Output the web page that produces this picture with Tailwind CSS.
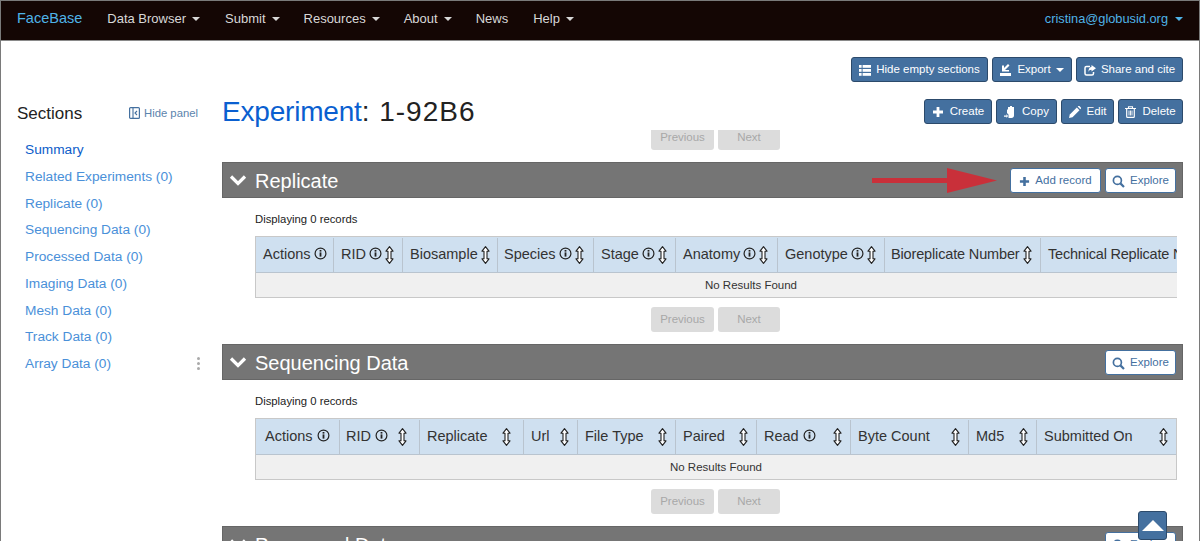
<!DOCTYPE html>
<html lang="en">
<head>
    <meta charset="UTF-8">
    <meta name="viewport" content="width=device-width, initial-scale=1.0">
    <title>Experiment: 1-92B6</title>
    <script src="https://cdn.jsdelivr.net/npm/@tailwindcss/browser@4"></script>
</head>
<body class="bg-white">
    <svg class="hidden">
        <symbol id="sort" viewBox="0 0 9 18"><path d="M4.5 .7L8 5.2H6V12.8H8L4.5 17.3L1 12.8H3V5.2H1Z" fill="#fff" stroke="#222" stroke-width="1.1" stroke-linejoin="round"/></symbol>
        <symbol id="info" viewBox="0 0 13 13"><circle cx="6.5" cy="6.5" r="5.4" fill="none" stroke="#222" stroke-width="1.2"/><rect x="5.6" y="5.4" width="1.8" height="4.2" fill="#222"/><rect x="5.6" y="3" width="1.8" height="1.6" fill="#222"/></symbol>
        <symbol id="chev" viewBox="0 0 18 12"><path d="M2 2.5L9 9.5L16 2.5" fill="none" stroke="#fff" stroke-width="3.2"/></symbol>
        <symbol id="plus" viewBox="0 0 12 12"><path d="M6 1V11M1 6H11" fill="none" stroke="currentColor" stroke-width="2.8"/></symbol>
        <symbol id="search" viewBox="0 0 13 13"><circle cx="5.4" cy="5.4" r="4" fill="none" stroke="currentColor" stroke-width="1.7"/><path d="M8.4 8.4L12 12" stroke="currentColor" stroke-width="2.2"/></symbol>
    </svg>

    <div class="relative w-[1200px] h-[541px] overflow-hidden border-t border-x border-[#7a7a7a] font-['Liberation_Sans',Arial,sans-serif] text-[#222]">
        <!-- top nav -->
        <nav class="flex items-center h-[36px] bg-[#140604] border-b border-[#8a8a8a] box-content pl-4 pr-[16px] pb-[3px] text-[13px] text-[#d8d8d8]">
            <a class="text-[14.5px] text-[#4fb3e8] mr-[25px]">FaceBase</a>
            <a class="flex items-center gap-[6px] mr-[25px]">Data Browser <span class="border-x-[4px] border-x-transparent border-t-[4px] border-t-[#d8d8d8]"></span></a>
            <a class="flex items-center gap-[6px] mr-[24px]">Submit <span class="border-x-[4px] border-x-transparent border-t-[4px] border-t-[#d8d8d8]"></span></a>
            <a class="flex items-center gap-[6px] mr-[24px]">Resources <span class="border-x-[4px] border-x-transparent border-t-[4px] border-t-[#d8d8d8]"></span></a>
            <a class="flex items-center gap-[6px] mr-[24px]">About <span class="border-x-[4px] border-x-transparent border-t-[4px] border-t-[#d8d8d8]"></span></a>
            <a class="mr-[25px]">News</a>
            <a class="flex items-center gap-[6px]">Help <span class="border-x-[4px] border-x-transparent border-t-[4px] border-t-[#d8d8d8]"></span></a>
            <a class="flex items-center gap-[6px] ml-auto text-[12.8px] text-[#4fb3e8]">cristina@globusid.org <span class="ml-[1px] border-x-[4px] border-x-transparent border-t-[4px] border-t-[#4fb3e8]"></span></a>
        </nav>

        <div class="flex">
            <!-- sidebar -->
            <aside class="relative w-[221px] shrink-0 pt-[62px]">
                <div class="flex items-center h-[20px] pl-4 pr-[24px]">
                    <span class="text-[17px] leading-none">Sections</span>
                    <span class="flex items-center gap-[4px] ml-auto text-[11.3px] text-[#5b84ad]">
                        <svg width="11" height="12" viewBox="0 0 11 12"><rect x=".6" y=".6" width="9.8" height="10.8" rx="1" fill="none" stroke="#44709f" stroke-width="1.2"/><path d="M4 1V11M8 4L6 6L8 8" fill="none" stroke="#44709f" stroke-width="1.1"/></svg>
                        Hide panel
                    </span>
                </div>
                <ul class="mt-[14px] pl-6 text-[13.7px] text-[#4a90d9] leading-[26.75px]">
                    <li class="text-[#0b5cc9]">Summary</li>
                    <li>Related Experiments (0)</li>
                    <li>Replicate (0)</li>
                    <li>Sequencing Data (0)</li>
                    <li>Processed Data (0)</li>
                    <li>Imaging Data (0)</li>
                    <li>Mesh Data (0)</li>
                    <li>Track Data (0)</li>
                    <li>Array Data (0)</li>
                </ul>
                <div class="absolute left-[196px] top-[316px] flex flex-col gap-[2px]">
                    <span class="w-[3px] h-[3px] rounded-full bg-[#aaa]"></span>
                    <span class="w-[3px] h-[3px] rounded-full bg-[#aaa]"></span>
                    <span class="w-[3px] h-[3px] rounded-full bg-[#aaa]"></span>
                </div>
            </aside>

            <main class="w-[961px] shrink-0">
                <!-- page toolbar -->
                <div class="flex justify-end gap-1 mt-4 text-[11.5px] text-white">
                    <button class="flex items-center justify-center gap-[5px] w-[137px] h-[25px] pt-[1px] rounded-[3px] bg-[#44709f] border border-[#2c4a6b] whitespace-nowrap">
                        <svg width="12" height="11" viewBox="0 0 12 11" fill="#fff"><rect y="0" width="2.6" height="2.8"/><rect x="3.6" y="0" width="8.4" height="2.8"/><rect y="4" width="2.6" height="2.8"/><rect x="3.6" y="4" width="8.4" height="2.8"/><rect y="8" width="2.6" height="2.8"/><rect x="3.6" y="8" width="8.4" height="2.8"/></svg>
                        Hide empty sections
                    </button>
                    <button class="flex items-center justify-center gap-[5px] w-[80px] h-[25px] pt-[1px] rounded-[3px] bg-[#44709f] border border-[#2c4a6b] whitespace-nowrap">
                        <svg width="12" height="12" viewBox="0 0 12 12" fill="#fff"><rect x="0" y="9" width="11" height="3"/><path d="M2 7.5H9V6H5L9.5 1.5L8 0L4 4V1.5H2Z"/></svg>
                        Export
                        <span class="border-x-[4px] border-x-transparent border-t-[4px] border-t-white"></span>
                    </button>
                    <button class="flex items-center justify-center gap-[5px] w-[107px] h-[25px] pt-[1px] rounded-[3px] bg-[#44709f] border border-[#2c4a6b] whitespace-nowrap">
                        <svg width="12" height="11" viewBox="0 0 12 11"><path d="M6 1.5H2.5A1.5 1.5 0 0 0 1 3V8.5A1.5 1.5 0 0 0 2.5 10H8A1.5 1.5 0 0 0 9.500 8.500V7" fill="none" stroke="#fff" stroke-width="1.500"/><path d="M7.500 0L12 3.200L7.500 6.500V4.700C5.800 4.700 5 5.500 4.500 7C4.300 4.500 5.300 2.200 7.500 1.800Z" fill="#fff"/></svg>
                        Share and cite
                    </button>
                </div>

                <!-- title row -->
                <div class="flex items-start justify-between mt-[17px] h-[31px]">
                    <h1 class="text-[28px] leading-[26px]"><span class="text-[#0a5fd0] tracking-[-0.2px]">Experiment</span><span class="tracking-[1px]">: 1-92B6</span></h1>
                    <div class="flex gap-1 text-[11.5px] text-white">
                        <button class="flex items-center justify-center gap-[6px] w-[68px] h-[25px] pt-[1px] rounded-[3px] bg-[#44709f] border border-[#2c4a6b]">
                            <svg class="w-[12px] h-[12px]"><use href="#plus"/></svg>
                            Create
                        </button>
                        <button class="flex items-center justify-center gap-[6px] w-[61px] h-[25px] pt-[1px] rounded-[3px] bg-[#44709f] border border-[#2c4a6b]">
                            <svg width="12" height="13" viewBox="0 0 12 13" fill="#fff"><path d="M4 1H6V0H8V1H10V2V9.500C10 11 9 12 7.500 12H4.500V8.500L3 7V3.500H4Z"/><path d="M0 9.500H2.500V8L4 10L2.500 12V10.800H0Z"/></svg>
                            Copy
                        </button>
                        <button class="flex items-center justify-center gap-[6px] w-[53px] h-[25px] pt-[1px] rounded-[3px] bg-[#44709f] border border-[#2c4a6b]">
                            <svg width="12" height="12" viewBox="0 0 12 12" fill="#fff"><path d="M0 12L.8 8.500L7.800 1.500L10.500 4.200L3.500 11.200Z"/><path d="M8.700 .6L9.300 0C9.700 -.2 10 -.2 10.400 .1L11.900 1.600C12.100 2 12.100 2.300 11.800 2.700L11.300 3.300Z"/></svg>
                            Edit
                        </button>
                        <button class="flex items-center justify-center gap-[6px] w-[65px] h-[25px] pt-[1px] rounded-[3px] bg-[#44709f] border border-[#2c4a6b]">
                            <svg width="11" height="12" viewBox="0 0 11 12"><path d="M0 2.500H11M3.500 2.500V.8H7.500V2.500" fill="none" stroke="#fff" stroke-width="1.100"/><path d="M1.700 2.500V10.500C1.700 11 2 11.400 2.500 11.400H8.500C9 11.400 9.300 11 9.300 10.500V2.500" fill="none" stroke="#fff" stroke-width="1.200"/><path d="M4 4.500V9.500M5.500 4.500V9.500M7 4.500V9.500" stroke="#fff" stroke-width=".9"/></svg>
                            Delete
                        </button>
                    </div>
                </div>

                <!-- pager of the section above, scrolled out of view -->
                <div class="flex items-end justify-center gap-1 h-[20px] pl-[26px] overflow-hidden text-[11.5px] text-[#a8a8a8]">
                    <span class="flex items-center justify-center shrink-0 w-[63px] h-[25px] pt-[1px] rounded-[3px] bg-[#dcdcdc]">Previous</span>
                    <span class="flex items-center justify-center shrink-0 w-[62px] h-[25px] pt-[1px] rounded-[3px] bg-[#dcdcdc]">Next</span>
                </div>

                <!-- Replicate -->
                <section class="mt-[12px]">
                    <div class="flex items-center h-[36px] bg-[#757575] border border-[#666] pl-[6px] pr-[6px] text-white">
                        <svg class="w-[18px] h-[12px]"><use href="#chev"/></svg>
                        <h2 class="ml-[8px] mt-[2px] text-[20px]">Replicate</h2>
                        <div class="flex gap-1 ml-auto mt-[1px] text-[11.5px] text-[#44709f]">
                            <button class="flex items-center justify-center gap-[5px] w-[91px] h-[25px] pt-[1px] rounded-[3px] bg-white border border-[#44709f]">
                                <svg class="w-[11px] h-[11px]"><use href="#plus"/></svg>
                                Add record
                            </button>
                            <button class="flex items-center justify-center gap-[5px] w-[71px] h-[25px] pt-[1px] rounded-[3px] bg-white border border-[#44709f]">
                                <svg class="w-[13px] h-[13px]"><use href="#search"/></svg>
                                Explore
                            </button>
                        </div>
                    </div>
                    <div class="pl-[33px] pr-[6px]">
                        <p class="h-[38px] pt-[14px] text-[11.3px] leading-[14px]">Displaying 0 records</p>
                        <div class="overflow-hidden border-l border-y border-[#c8c8c8] h-[62px]">
                            <div class="flex h-[36px] w-[1200px] pt-[1px] bg-[#cfe0f0] border-b border-[#b9c4cf] text-[14.5px] text-[#333] whitespace-nowrap">
                                <div class="flex items-center gap-[3px] w-[78px] px-[7px] border-r border-[#b9c4cf]">Actions <svg class="shrink-0 w-[13px] h-[13px] -mt-[3px]"><use href="#info"/></svg></div>
                                <div class="flex items-center gap-[3px] w-[69px] px-[7px] border-r border-[#b9c4cf]">RID <svg class="shrink-0 w-[13px] h-[13px] -mt-[3px]"><use href="#info"/></svg> <svg class="shrink-0 w-[9px] h-[18px]"><use href="#sort"/></svg></div>
                                <div class="flex items-center gap-[3px] w-[95px] px-[7px] border-r border-[#b9c4cf]">Biosample <svg class="shrink-0 w-[9px] h-[18px]"><use href="#sort"/></svg></div>
                                <div class="flex items-center gap-[3px] w-[96px] px-[6px] border-r border-[#b9c4cf]">Species <svg class="shrink-0 w-[13px] h-[13px] -mt-[3px]"><use href="#info"/></svg> <svg class="shrink-0 w-[9px] h-[18px]"><use href="#sort"/></svg></div>
                                <div class="flex items-center gap-[3px] w-[82px] px-[7px] border-r border-[#b9c4cf]">Stage <svg class="shrink-0 w-[13px] h-[13px] -mt-[3px]"><use href="#info"/></svg> <svg class="shrink-0 w-[9px] h-[18px]"><use href="#sort"/></svg></div>
                                <div class="flex items-center gap-[3px] w-[102px] px-[7px] border-r border-[#b9c4cf]">Anatomy <svg class="shrink-0 w-[13px] h-[13px] -mt-[3px]"><use href="#info"/></svg> <svg class="shrink-0 w-[9px] h-[18px]"><use href="#sort"/></svg></div>
                                <div class="flex items-center gap-[3px] w-[107px] px-[7px] border-r border-[#b9c4cf]">Genotype <svg class="shrink-0 w-[13px] h-[13px] -mt-[3px]"><use href="#info"/></svg> <svg class="shrink-0 w-[9px] h-[18px]"><use href="#sort"/></svg></div>
                                <div class="flex items-center gap-[3px] w-[156px] px-[6px] border-r border-[#b9c4cf] tracking-[-0.15px]">Bioreplicate Number <svg class="shrink-0 w-[9px] h-[18px]"><use href="#sort"/></svg></div>
                                <div class="flex items-center px-[7px] tracking-[-0.2px]">Technical Replicate Number</div>
                            </div>
                            <div class="flex items-center justify-center h-[24px] w-[990px] pt-[1px] bg-[#f0f0f0] text-[11.5px] text-[#333]">No Results Found</div>
                        </div>
                    </div>
                    <div class="flex justify-center gap-1 mt-[9px] pl-[26px] text-[11.5px] text-[#a8a8a8]">
                        <span class="flex items-center justify-center w-[63px] h-[25px] pt-[1px] rounded-[3px] bg-[#dcdcdc]">Previous</span>
                        <span class="flex items-center justify-center w-[62px] h-[25px] pt-[1px] rounded-[3px] bg-[#dcdcdc]">Next</span>
                    </div>
                </section>

                <!-- Sequencing Data -->
                <section class="mt-[12px]">
                    <div class="flex items-center h-[36px] bg-[#757575] border border-[#666] pl-[6px] pr-[6px] text-white">
                        <svg class="w-[18px] h-[12px]"><use href="#chev"/></svg>
                        <h2 class="ml-[8px] mt-[2px] text-[20px]">Sequencing Data</h2>
                        <button class="flex items-center justify-center gap-[5px] ml-auto mt-[1px] w-[71px] h-[25px] pt-[1px] rounded-[3px] bg-white border border-[#44709f] text-[11.5px] text-[#44709f]">
                            <svg class="w-[13px] h-[13px]"><use href="#search"/></svg>
                            Explore
                        </button>
                    </div>
                    <div class="pl-[33px] pr-[6px]">
                        <p class="h-[38px] pt-[14px] text-[11.3px] leading-[14px]">Displaying 0 records</p>
                        <div class="border border-[#c8c8c8] h-[62px]">
                            <div class="flex h-[36px] pt-[1px] bg-[#cfe0f0] border-b border-[#b9c4cf] text-[14.5px] text-[#333] whitespace-nowrap">
                                <div class="flex items-center gap-[4px] w-[84px] pl-[9px] border-r border-[#b9c4cf]">Actions <svg class="shrink-0 w-[13px] h-[13px] -mt-[3px]"><use href="#info"/></svg></div>
                                <div class="flex items-center gap-[4px] w-[80px] pl-[6px] pr-[12px] border-r border-[#b9c4cf]">RID <svg class="shrink-0 w-[13px] h-[13px] -mt-[3px]"><use href="#info"/></svg> <svg class="shrink-0 ml-auto w-[9px] h-[18px]"><use href="#sort"/></svg></div>
                                <div class="flex items-center justify-between w-[104px] pl-[7px] pr-[12px] border-r border-[#b9c4cf]">Replicate <svg class="shrink-0 w-[9px] h-[18px]"><use href="#sort"/></svg></div>
                                <div class="flex items-center justify-between w-[54px] pl-[7px] pr-[8px] border-r border-[#b9c4cf]">Url <svg class="shrink-0 w-[9px] h-[18px]"><use href="#sort"/></svg></div>
                                <div class="flex items-center justify-between w-[98px] pl-[7px] pr-[8px] border-r border-[#b9c4cf]">File Type <svg class="shrink-0 w-[9px] h-[18px]"><use href="#sort"/></svg></div>
                                <div class="flex items-center justify-between w-[81px] pl-[7px] pr-[8px] border-r border-[#b9c4cf]">Paired <svg class="shrink-0 w-[9px] h-[18px]"><use href="#sort"/></svg></div>
                                <div class="flex items-center gap-[4px] w-[94px] pl-[7px] pr-[8px] border-r border-[#b9c4cf]">Read <svg class="shrink-0 w-[13px] h-[13px] -mt-[3px]"><use href="#info"/></svg> <svg class="shrink-0 ml-auto w-[9px] h-[18px]"><use href="#sort"/></svg></div>
                                <div class="flex items-center justify-between w-[118px] pl-[7px] pr-[8px] border-r border-[#b9c4cf]">Byte Count <svg class="shrink-0 w-[9px] h-[18px]"><use href="#sort"/></svg></div>
                                <div class="flex items-center justify-between w-[68px] pl-[7px] pr-[8px] border-r border-[#b9c4cf]">Md5 <svg class="shrink-0 w-[9px] h-[18px]"><use href="#sort"/></svg></div>
                                <div class="flex items-center justify-between flex-1 pl-[7px] pr-[8px]">Submitted On <svg class="shrink-0 w-[9px] h-[18px]"><use href="#sort"/></svg></div>
                            </div>
                            <div class="flex items-center justify-center h-[24px] pt-[1px] bg-[#f0f0f0] text-[11.5px] text-[#333]">No Results Found</div>
                        </div>
                    </div>
                    <div class="flex justify-center gap-1 mt-[9px] pl-[26px] text-[11.5px] text-[#a8a8a8]">
                        <span class="flex items-center justify-center w-[63px] h-[25px] pt-[1px] rounded-[3px] bg-[#dcdcdc]">Previous</span>
                        <span class="flex items-center justify-center w-[62px] h-[25px] pt-[1px] rounded-[3px] bg-[#dcdcdc]">Next</span>
                    </div>
                </section>

                <!-- Processed Data, cut off by the window -->
                <section class="mt-[12px]">
                    <div class="flex items-center h-[36px] bg-[#757575] border border-[#666] pl-[6px] pr-[6px] text-white">
                        <svg class="w-[18px] h-[12px]"><use href="#chev"/></svg>
                        <h2 class="ml-[8px] mt-[2px] text-[20px]">Processed Data</h2>
                        <button class="flex items-center justify-center gap-[5px] ml-auto mt-[1px] w-[71px] h-[25px] pt-[1px] rounded-[3px] bg-white border border-[#44709f] text-[11.5px] text-[#44709f]">
                            <svg class="w-[13px] h-[13px]"><use href="#search"/></svg>
                            Explore
                        </button>
                    </div>
                </section>
            </main>
        </div>

        <!-- red annotation arrow -->
        <svg class="absolute left-[871px] top-[167px]" width="126" height="26" viewBox="0 0 126 26"><rect x="0" y="10" width="76" height="5" fill="#c9303a"/><path d="M75 0L125 12.500L75 25Z" fill="#c9303a"/></svg>

        <!-- back to top -->
        <button class="absolute left-[1137px] top-[510px] flex items-center justify-center w-[29px] h-[29px] rounded-[3px] bg-[#44709f] border border-[#2c4a6b]">
            <span class="border-x-[11px] border-x-transparent border-b-[11px] border-b-white"></span>
        </button>
    </div>
</body>
</html>
